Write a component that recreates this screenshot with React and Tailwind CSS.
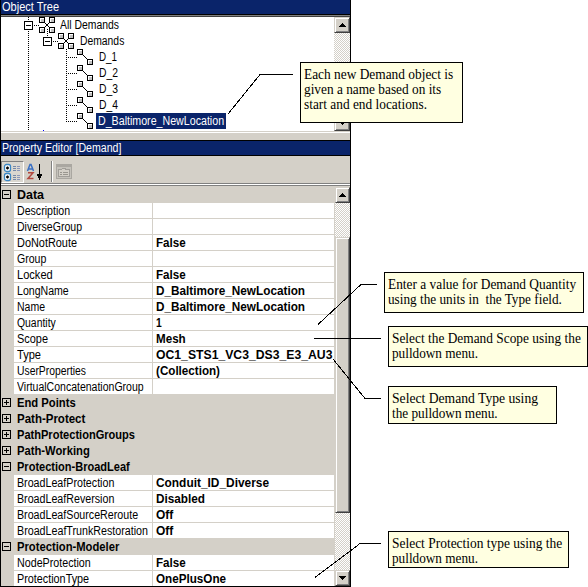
import { useLayoutEffect, useRef, useState } from "react";

// Text condensed or widened to a given width in pixels.
function Fit({ w, children }) {
  const ref = useRef(null);
  const [scale, setScale] = useState(1);
  useLayoutEffect(() => {
    setScale(w / ref.current.offsetWidth);
  }, [w, children]);
  return (
    <span ref={ref} className="inline-block origin-left whitespace-pre" style={{ transform: `scaleX(${scale})` }}>
      {children}
    </span>
  );
}

function Node({ x, y }) {
  return (
    <g>
      <rect x={x} y={y} width="6" height="6" fill="#000" />
      <rect x={x + 1} y={y + 1} width="4" height="4" fill="#fff" />
      <rect x={x + 2} y={y + 2} width="3" height="3" fill="#c0c0c0" />
    </g>
  );
}

function Dots({ x1, y1, x2, y2 }) {
  return <line x1={x1} y1={y1} x2={x2} y2={y2} stroke="#000" strokeDasharray="1 1" />;
}

function Expander({ x, y, plus, fill = "#fff" }) {
  return (
    <g stroke="#000" fill="none">
      <rect x={x + 0.5} y={y + 0.5} width="8" height="8" fill={fill} />
      <path d={`M${x + 2} ${y + 4.5}h5`} />
      {plus && <path d={`M${x + 4.5} ${y + 2}v5`} />}
    </g>
  );
}

function Cluster({ x }) {
  return (
    <g>
      <path d={`M${x + 5} 5l6 6M${x + 11} 5l-6 6`} stroke="#000" strokeWidth="1.2" />
      <rect x={x + 7} y="7" width="2" height="2" />
      <Node x={x} y={0} />
      <Node x={x + 10} y={0} />
      <Node x={x} y={10} />
      <Node x={x + 10} y={10} />
    </g>
  );
}

function TreeArt({ kind, last }) {
  const width = kind === "root" ? 58 : kind === "group" ? 78 : 95;
  return (
    <svg width={width} height="16" className="shrink-0" shapeRendering="crispEdges">
      <Dots x1={27.5} y1={0} x2={27.5} y2={16} />
      {kind === "root" && (
        <>
          <Dots x1={33} y1={8.5} x2={38} y2={8.5} />
          <Dots x1={46.5} y1={12} x2={46.5} y2={16} />
          <Expander x={23} y={4} />
          <Cluster x={38} />
        </>
      )}
      {kind === "group" && (
        <>
          <Dots x1={46.5} y1={0} x2={46.5} y2={4} />
          <Dots x1={52} y1={8.5} x2={57} y2={8.5} />
          <Expander x={42} y={4} />
          <Cluster x={57} />
        </>
      )}
      {kind === "leaf" && (
        <>
          <Dots x1={65.5} y1={0} x2={65.5} y2={last ? 9 : 16} />
          <Dots x1={67} y1={8.5} x2={76} y2={8.5} />
          <path d="M81 5l6 6" stroke="#000" />
          <Node x={76} y={0} />
          <Node x={86} y={10} />
        </>
      )}
    </svg>
  );
}

const TREE = [
  ["root", "All Demands", 59],
  ["group", "Demands", 44],
  ["leaf", "D_1", 18],
  ["leaf", "D_2", 19],
  ["leaf", "D_3", 19],
  ["leaf", "D_4", 19],
  ["leaf", "D_Baltimore_NewLocation", 126],
];

function ScrollButton({ up }) {
  return (
    <div className="flex h-4 w-full shrink-0 items-center justify-center border border-t-[#d4d0c8] border-l-[#d4d0c8] border-r-[#404040] border-b-[#404040] bg-[#d4d0c8] shadow-[inset_1px_1px_#fff,inset_-1px_-1px_#808080]">
      <svg width="7" height="4" shapeRendering="crispEdges">
        <path d={up ? "M3 0h1v1h1v1h1v1h1v1h-7v-1h1v-1h1v-1h1z" : "M0 0h7v1h-1v1h-1v1h-1v1h-1v-1h-1v-1h-1v-1h-1z"} />
      </svg>
    </div>
  );
}

const TRACK = "bg-[repeating-conic-gradient(#d4d0c8_0_25%,#fff_0_50%)] bg-[length:2px_2px]";

const ROWS = [
  ["-", "Data", 27],
  ["", "Description", 53],
  ["", "DiverseGroup", 65],
  ["", "DoNotRoute", 60, "False", 30],
  ["", "Group", 29],
  ["", "Locked", 36, "False", 30],
  ["", "LongName", 52, "D_Baltimore_NewLocation", 149],
  ["", "Name", 28, "D_Baltimore_NewLocation", 149],
  ["", "Quantity", 39, "1", 6],
  ["", "Scope", 31, "Mesh", 30],
  ["", "Type", 24, "OC1_STS1_VC3_DS3_E3_AU3", 176],
  ["", "UserProperties", 69, "(Collection)", 64],
  ["", "VirtualConcatenationGroup", 127],
  ["+", "End Points", 59],
  ["+", "Path-Protect", 68],
  ["+", "PathProtectionGroups", 118],
  ["+", "Path-Working", 73],
  ["-", "Protection-BroadLeaf", 113],
  ["", "BroadLeafProtection", 97, "Conduit_ID_Diverse", 113],
  ["", "BroadLeafReversion", 97, "Disabled", 49],
  ["", "BroadLeafSourceReroute", 121, "Off", 17],
  ["", "BroadLeafTrunkRestoration", 131, "Off", 17],
  ["-", "Protection-Modeler", 102],
  ["", "NodeProtection", 74, "False", 30],
  ["", "ProtectionType", 72, "OnePlusOne", 70],
];

function PropertyRow({ row }) {
  const [mark, name, nameW, value, valueW] = row;
  if (mark) {
    return (
      <div className="flex h-4 font-bold leading-4">
        <svg width="16" height="16" className="shrink-0" shapeRendering="crispEdges">
          <Expander x={1} y={3} plus={mark === "+"} fill="#d4d0c8" />
        </svg>
        <Fit w={nameW}>{name}</Fit>
      </div>
    );
  }
  return (
    <div className="flex h-4 pl-[13px] leading-4">
      <div className="w-[139px] border-r border-b border-[#d4d0c8] bg-white pl-[3px]">
        <Fit w={nameW}>{name}</Fit>
      </div>
      <div className="flex-1 border-b border-[#d4d0c8] bg-white pl-[3px] font-bold">
        {value && <Fit w={valueW}>{value}</Fit>}
      </div>
    </div>
  );
}

function Toolbar() {
  return (
    <div className="flex h-[27px] items-start pt-[5px]">
      <div className="h-[22px] w-[23px] border border-t-[#808080] border-l-[#808080] border-r-white border-b-white bg-[#dad7d0]">
        <svg width="21" height="20">
          {[2, 11].map((y) => (
            <g key={y}>
              <rect x="2.5" y={y + 0.5} width="6" height="7" rx="2" fill="#fff" stroke="#3a86c4" strokeWidth="1.3" />
              <path d={`M4 ${y + 4}h3M5.500 ${y + 2.5}v3`} stroke="#000" strokeWidth="1.3" />
              <path d={`M11 ${y + 2.5}h3M11 ${y + 4.5}h3M11 ${y + 6.5}h3`} stroke="#7488a8" />
              <path d={`M15 ${y + 2.5}h3M15 ${y + 4.5}h3M15 ${y + 6.5}h3`} stroke="#8a96b8" />
            </g>
          ))}
        </svg>
      </div>
      <svg width="26" height="22">
        <path d="M3.500 10L6 3.500h1L9.500 10M4.500 8h4" fill="none" stroke="#3a70c4" strokeWidth="1.5" />
        <path d="M4 11.800h5L4 17.500h5.500" fill="none" stroke="#b0483f" strokeWidth="1.5" />
        <path d="M15.500 3v13" stroke="#000" />
        <path d="M13 13h5v2h-1v2h-1v2h-1v-2h-1v-2h-1z" />
      </svg>
      <div className="ml-px h-[21px] w-0.5 border-l border-l-[#808080] border-r border-r-white" />
      <svg width="24" height="22" shapeRendering="crispEdges" className="ml-[3px]">
        <rect x="0" y="3" width="16" height="15" fill="#aaa7a1" />
        <rect x="1" y="6" width="14" height="11" fill="#c5c2bb" />
        <path d="M2.500 15V8.500h3l1-1h3v1h4v6.500z" fill="#d4d0c8" stroke="#a19e99" />
        <path d="M4 11.500h2M7 11.500h5M4 13.500h2M7 13.500h5" stroke="#99968f" />
      </svg>
    </div>
  );
}

const NOTES = [
  ["left-[300px] top-[62px] h-[61px] w-[163px]", [["Each new Demand object is", 149], ["given a name based on its", 137], ["start and end locations.", 123]]],
  ["left-[384px] top-[272px] h-[41px] w-[200px]", [["Enter a value for Demand Quantity", 188], ["using the units in  the Type field.", 174]]],
  ["left-[388px] top-[326px] h-[41px] w-[200px]", [["Select the Demand Scope using the", 189], ["pulldown menu.", 86]]],
  ["left-[388px] top-[386px] h-[38px] w-[169px]", [["Select Demand Type using", 146], ["the pulldown menu.", 106]]],
  ["left-[388px] top-[531px] h-[37px] w-[181px]", [["Select Protection type using the", 170], ["pulldown menu.", 86]]],
];

export default function App() {
  return (
    <div className="relative h-[587px] w-[588px] overflow-hidden bg-white font-['Liberation_Sans',Arial,sans-serif] text-[12px] text-black">
      <div className="flex h-[587px] w-[351px] flex-col border-x border-b border-black bg-[#d4d0c8]">
        <div className="h-[14px] shrink-0 bg-[#0a246a] pl-px leading-[14px] text-white">
          <Fit w={57}>Object Tree</Fit>
        </div>
        <div className="flex h-[117px] shrink-0 border-t border-black bg-white">
          <div className="flex w-full border-t border-[#808080]">
            <div className="flex w-full border-t border-[#404040]">
              <div className="flex-1">
                {TREE.map(([kind, label, w], i) => (
                  <div key={label} className="flex h-4 leading-4">
                    <TreeArt kind={kind} last={i === 6} />
                    {i === 6 ? (
                      <div className="w-[130px] bg-[#0a246a] pl-0.5 text-white">
                        <Fit w={w}>{label}</Fit>
                      </div>
                    ) : (
                      <div className={kind === "leaf" ? "pl-[3px]" : "pl-px"}>
                        <Fit w={w}>{label}</Fit>
                      </div>
                    )}
                  </div>
                ))}
                <svg width="60" height="2" className="block" shapeRendering="crispEdges">
                  <rect x="27" y="0" width="1" height="1" />
                  <rect x="42" y="1" width="1" height="1" fill="#00f" />
                </svg>
              </div>
              <div className={`flex w-4 flex-col justify-between ${TRACK}`}>
                <ScrollButton up />
                <ScrollButton />
              </div>
            </div>
          </div>
        </div>
        <div className="h-[9px] shrink-0 border-t border-[#d4d0c8] shadow-[inset_0_1px_#fff]" />
        <div className="h-4 shrink-0 border-y border-black bg-[#0a246a] pl-px leading-[14px] text-white">
          <Fit w={119}>Property Editor [Demand]</Fit>
        </div>
        <Toolbar />
        <div className="h-1 shrink-0 border-t border-[#808080] bg-[#808080] shadow-[inset_0_1px_#fff,inset_0_-1px_#d4d0c8]" />
        <div className="flex h-[399px] shrink-0 overflow-hidden">
          <div className="w-[334px] border-r border-[#d4d0c8]">
            {ROWS.map((row, i) => (
              <PropertyRow key={i} row={row} />
            ))}
          </div>
          <div className={`flex flex-1 flex-col ${TRACK}`}>
            <ScrollButton up />
            <div className="mt-[34px] h-[276px] border border-t-[#d4d0c8] border-l-[#d4d0c8] border-r-[#404040] border-b-[#404040] bg-[#d4d0c8] shadow-[inset_1px_1px_#fff,inset_-1px_-1px_#808080]" />
            <div className="flex-1" />
            <ScrollButton />
          </div>
        </div>
      </div>

      {/* Leader lines from the notes to the fields they describe */}
      <svg width="588" height="587" className="absolute inset-0" fill="none" stroke="#000" shapeRendering="crispEdges">
        <path d="M228 114L260 74.500H293" />
        <path d="M318 324.500L361 284.500H377" />
        <path d="M314 338.500H381" />
        <path d="M333 359L365 398.500H381" />
        <path d="M315 577.500L360 543.500H381" />
      </svg>
      {NOTES.map(([place, lines]) => (
        <div key={place} className={`absolute border border-black bg-[#ffffe1] pl-[3px] pt-1 font-['Liberation_Serif','Times_New_Roman',serif] text-[14px] leading-[15px] ${place}`}>
          {lines.map(([text, w]) => (
            <div key={text} className="h-[15px]">
              <Fit w={w}>{text}</Fit>
            </div>
          ))}
        </div>
      ))}
    </div>
  );
}
